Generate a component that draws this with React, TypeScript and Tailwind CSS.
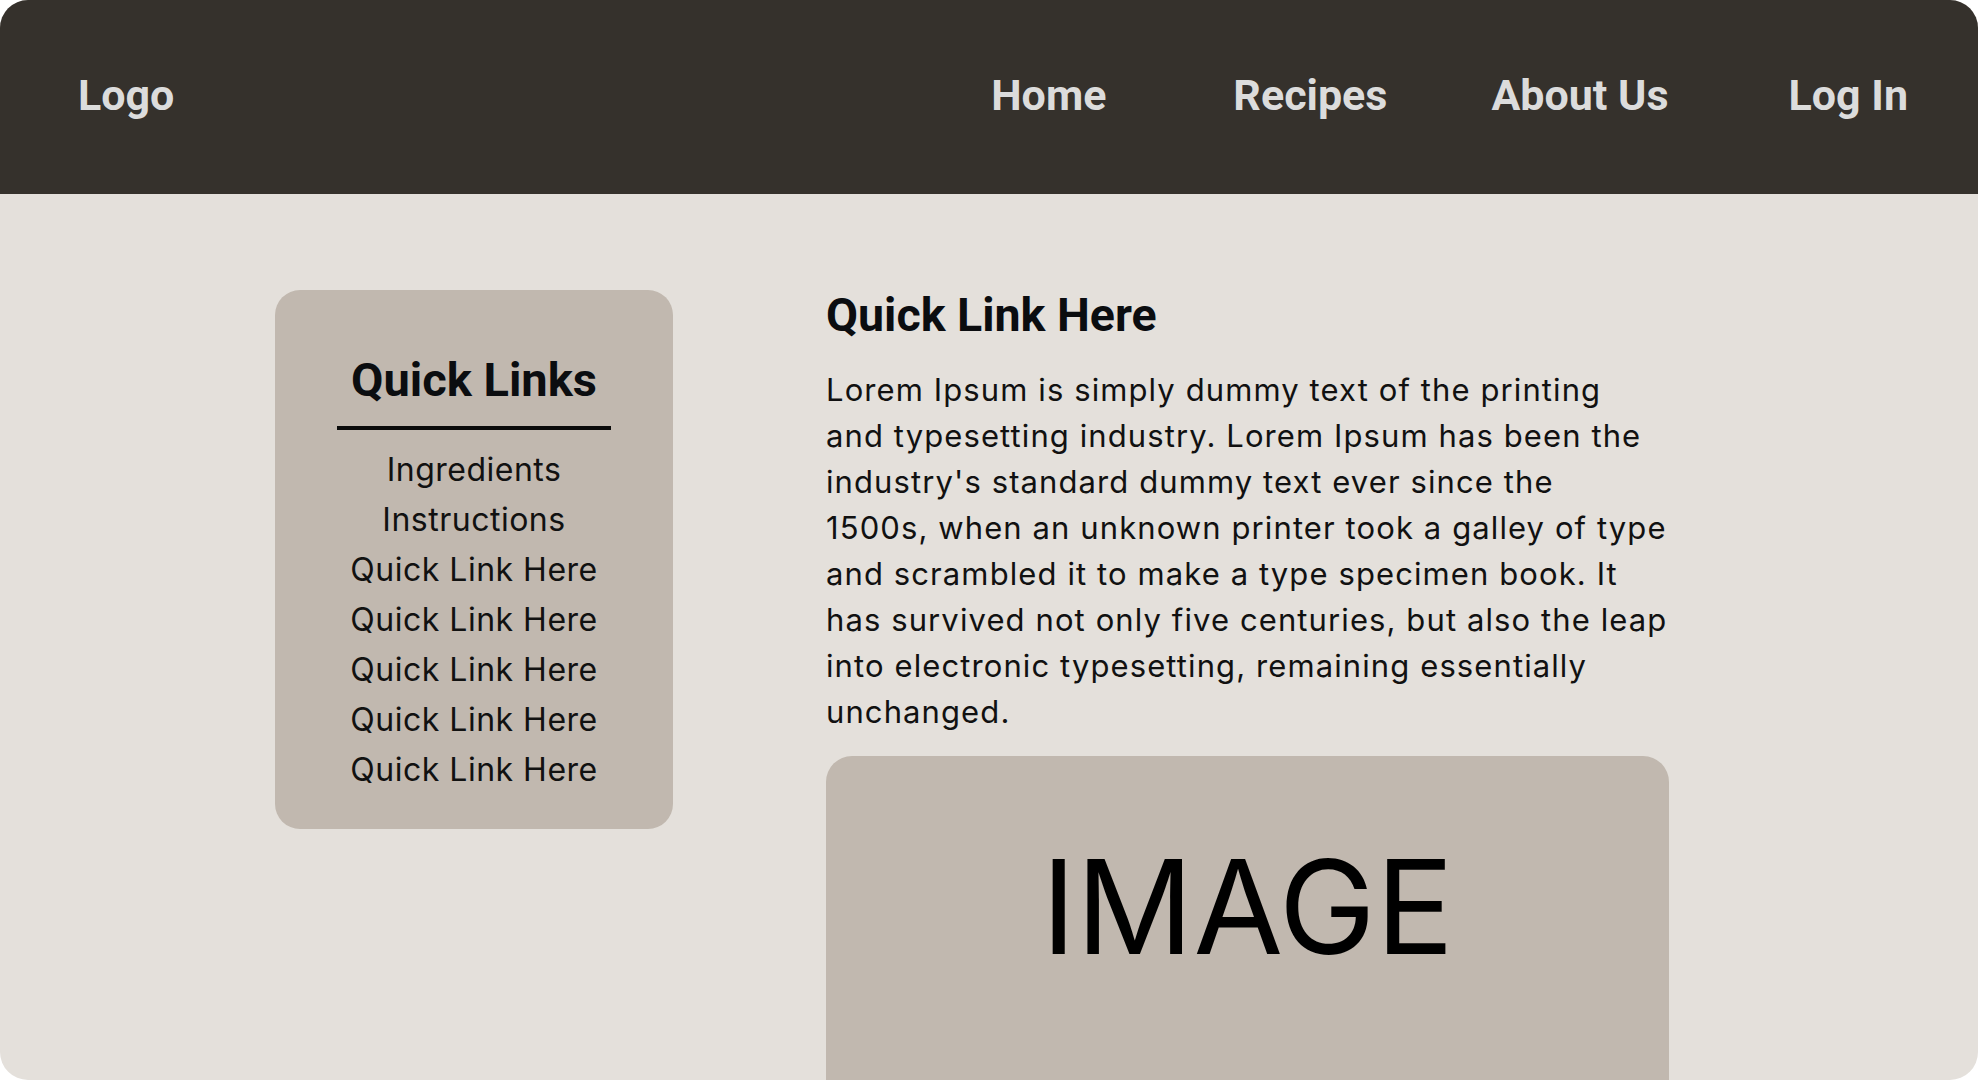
const navItems = [
  { label: "Home", gap: "" },
  { label: "Recipes", gap: "ml-[127px]" },
  { label: "About Us", gap: "ml-[104px]" },
  { label: "Log In", gap: "ml-[120px]" },
];

const sideLinks = [
  "Ingredients",
  "Instructions",
  "Quick Link Here",
  "Quick Link Here",
  "Quick Link Here",
  "Quick Link Here",
  "Quick Link Here",
];

const bodyLines = [
  "Lorem Ipsum is simply dummy text of the printing",
  "and typesetting industry. Lorem Ipsum has been the",
  "industry's standard dummy text ever since the",
  "1500s, when an unknown printer took a galley of type",
  "and scrambled it to make a type specimen book. It",
  "has survived not only five centuries, but also the leap",
  "into electronic typesetting, remaining essentially",
  "unchanged.",
];

const roboto = "font-['Roboto',_'Liberation_Sans',_sans-serif]";
const inter = "font-['Inter',_'Liberation_Sans',_sans-serif]";

function Header() {
  return (
    <header className="flex h-[194px] shrink-0 items-center bg-[#35312c] pb-[3px] pl-[78px] pr-[70px]">
      <a className={`${roboto} text-[43px] font-bold leading-none text-[#dcdcdc]`}>Logo</a>
      <nav className="ml-auto flex items-center">
        {navItems.map((item) => (
          <a
            key={item.label}
            className={`${roboto} ${item.gap} text-[43px] font-bold leading-none text-[#dcdcdc]`}
          >
            {item.label}
          </a>
        ))}
      </nav>
    </header>
  );
}

function QuickLinks() {
  return (
    <aside className="flex w-[398px] shrink-0 flex-col items-center rounded-[25px] bg-[#c1b8af] pb-[34px] pt-[66px]">
      <h2 className={`${roboto} text-[47px] font-bold leading-none text-[#0b0d10]`}>Quick Links</h2>
      <div className="mt-[23px] h-[4px] w-[274px] bg-[#0b0b0b]" />
      <ul className="mt-[15px] flex flex-col items-center">
        {sideLinks.map((link, i) => (
          <li key={i} className={`${inter} text-[32px] leading-[50px] tracking-[0.5px] text-[#111111]`}>
            {link}
          </li>
        ))}
      </ul>
    </aside>
  );
}

export default function App() {
  return (
    <div className="h-[1080px] w-[1980px] bg-white">
      <div className="flex h-[1080px] w-[1978px] flex-col overflow-hidden rounded-[28px] bg-[#e4e0db]">
        <Header />
        <main className="flex items-start pl-[275px] pt-[96px]">
          <QuickLinks />
          <section className="ml-[153px] w-[843px]">
            <h1 className={`${roboto} pt-[2px] text-[46.5px] font-bold leading-none text-[#0b0d10]`}>
              Quick Link Here
            </h1>
            <p className={`${inter} mt-[28px] text-[31px] leading-[46px] tracking-[1.1px] text-[#111111]`}>
              {bodyLines.map((line, i) => (
                <span key={i} className="block whitespace-nowrap">
                  {line}
                </span>
              ))}
            </p>
            <div className="mt-[21px] flex h-[400px] justify-center rounded-t-[26px] bg-[#c1b8af] pt-[86px]">
              <span className={`${inter} text-[130px] leading-none text-black`}>IMAGE</span>
            </div>
          </section>
        </main>
      </div>
    </div>
  );
}
